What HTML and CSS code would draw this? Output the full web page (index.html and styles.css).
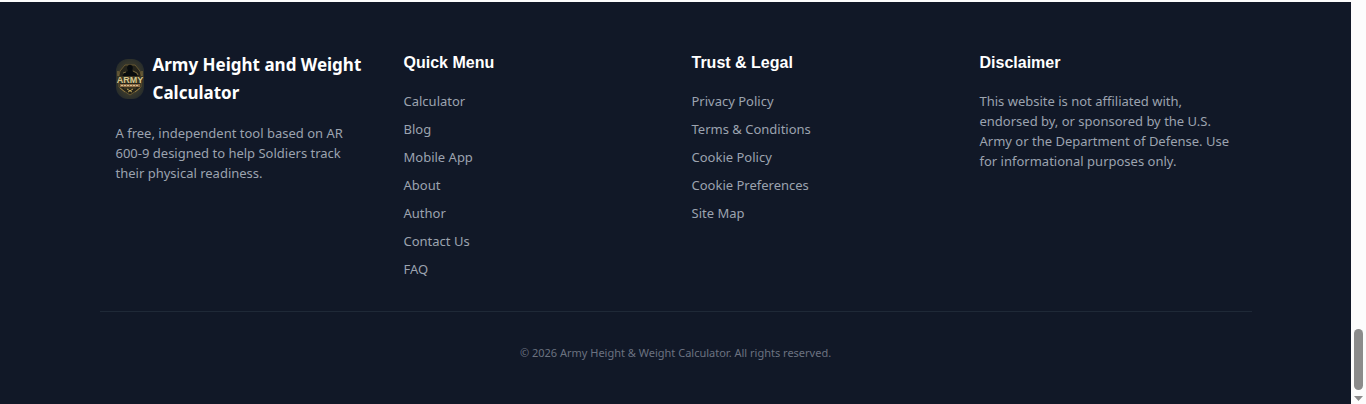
FILE: index.html
```
<!DOCTYPE html>
<html lang="en">
<head>
    <meta charset="UTF-8">
    <meta name="viewport" content="width=device-width, initial-scale=1.0">
    <title>Army Height and Weight Calculator</title>
    <link rel="stylesheet" href="styles.css">
</head>
<body>

<div class="page">
    <footer class="site-footer">
        <div class="container">
            <div class="footer-grid">
                <div>
                    <a class="brand" href="#">
                        <svg class="brand-logo" viewBox="0 0 28 40" width="28" height="40" aria-hidden="true">
                            <defs>
                                <radialGradient id="badge" cx="50%" cy="50%" r="60%">
                                    <stop offset="0" stop-color="#4a4630"/>
                                    <stop offset="0.7" stop-color="#34352b"/>
                                    <stop offset="1" stop-color="#242a2b"/>
                                </radialGradient>
                            </defs>
                            <rect width="28" height="40" rx="12" fill="url(#badge)"/>
                            <!-- shield -->
                            <path d="M4 12 L9 6 H19 L24 12 L25 16 V28 L20 32 L14 36 L8 32 L3 28 V16 Z" fill="#25241b" stroke="#665731" stroke-width="1"/>
                            <path d="M2 12 V18 M26 12 V18 M4 29 L9 33 M24 29 L19 33" stroke="#8e7640" stroke-width="1"/>
                            <!-- soldier -->
                            <path d="M6 18 L8 14 L12 12 L11 9 Q12 5 15 6 Q18 7 16 12 L20 14 L22 18 Z" fill="#070b0e"/>
                            <path d="M17 12 L21 14 L22 16 M7 14 L10 13" fill="none" stroke="#75663d" stroke-width="1"/>
                            <rect x="1" y="17" width="26" height="7" fill="#3a3522"/>
                            <text class="logo-text" x="14" y="24" text-anchor="middle">ARMY</text>
                            <rect x="4" y="25" width="20" height="3" fill="#8d6d46"/>
                            <path d="M5 26.500 H23" stroke="#d4bd91" stroke-width="1" stroke-dasharray="2 1"/>
                            <path d="M8 29 H20" stroke="#514324" stroke-width="1"/>
                            <path d="M11 30 L16 33 M17 30 L12 33" stroke="#bda358" stroke-width="1"/>
                        </svg>
                        <span>Army Height and Weight Calculator</span>
                    </a>
                    <p class="footer-text">A free, independent tool based on AR 600-9 designed to help Soldiers track their physical readiness.</p>
                </div>

                <nav aria-labelledby="quick-menu">
                    <h3 id="quick-menu">Quick Menu</h3>
                    <ul>
                        <li><a href="#">Calculator</a></li>
                        <li><a href="#">Blog</a></li>
                        <li><a href="#">Mobile App</a></li>
                        <li><a href="#">About</a></li>
                        <li><a href="#">Author</a></li>
                        <li><a href="#">Contact Us</a></li>
                        <li><a href="#">FAQ</a></li>
                    </ul>
                </nav>

                <nav aria-labelledby="trust-legal">
                    <h3 id="trust-legal">Trust &amp; Legal</h3>
                    <ul>
                        <li><a href="#">Privacy Policy</a></li>
                        <li><a href="#">Terms &amp; Conditions</a></li>
                        <li><a href="#">Cookie Policy</a></li>
                        <li><a href="#">Cookie Preferences</a></li>
                        <li><a href="#">Site Map</a></li>
                    </ul>
                </nav>

                <div>
                    <h3>Disclaimer</h3>
                    <p class="footer-text">This website is not affiliated with, endorsed by, or sponsored by the U.S. Army or the Department of Defense. Use for informational purposes only.</p>
                </div>
            </div>

            <div class="footer-bottom">
                <p>© 2026 Army Height &amp; Weight Calculator. All rights reserved.</p>
            </div>
        </div>
    </footer>
</div>

<div class="scrollbar" aria-hidden="true">
    <div class="scrollbar-thumb"></div>
    <svg width="9" height="5" viewBox="0 0 9 5">
        <path d="M0 0 H9 L4.500 5 Z" fill="#8b8b8b"/>
    </svg>
</div>

</body>
</html>
```
FILE: styles.css
```
* {
    box-sizing: border-box;
}

body {
    display: flex;
    height: 100vh;
    margin: 0;
    overflow: hidden;
    background-color: #fcfcfc;
    font-family: 'Segoe UI', 'Noto Sans', sans-serif;
}

.page {
    flex: 1;
    padding-top: 2px;
}

.site-footer {
    background-color: #111827;
    color: #9ca3af;
    padding: 49px 0;
}

.container {
    max-width: 1152px;
    margin: 0 auto;
}

.footer-grid {
    display: grid;
    grid-template-columns: repeat(4, 1fr);
    gap: 32px;
    padding: 0 16px;
}

.brand {
    display: flex;
    align-items: center;
    gap: 9px;
    margin-bottom: 16px;
    color: #fff;
    font-size: 17px;
    font-weight: 700;
    line-height: 28px;
    text-decoration: none;
}

.brand-logo {
    flex-shrink: 0;
}

.logo-text {
    font-family: 'Liberation Sans', sans-serif;
    font-size: 9px;
    font-weight: 700;
    fill: #d6c691;
}

.footer-text {
    margin: 0;
    padding-right: 4px;
    font-size: 13px;
    line-height: 20px;
}

h3 {
    margin: 0 0 16px;
    color: #fff;
    font-family: Arial, 'Liberation Sans', sans-serif;
    font-size: 16px;
    font-weight: 700;
    line-height: 24px;
}

ul {
    display: flex;
    flex-direction: column;
    gap: 8px;
    margin: 0;
    padding: 0;
    list-style: none;
    font-size: 13px;
    line-height: 20px;
}

li a {
    display: block;
    color: #9ca3af;
    text-decoration: none;
}

a:hover {
    color: #fff;
}

.footer-bottom {
    margin-top: 32px;
    padding-top: 33px;
    border-top: 1px solid #1f2937;
    color: #6b7280;
    font-size: 11px;
    line-height: 16px;
    text-align: center;
}

.footer-bottom p {
    margin: 0;
}

.scrollbar {
    display: flex;
    flex-direction: column;
    align-items: center;
    justify-content: flex-end;
    gap: 6px;
    width: 15px;
    padding-bottom: 3px;
}

.scrollbar-thumb {
    width: 9px;
    height: 61px;
    border-radius: 5px;
    background-color: #8b8b8b;
}
```
